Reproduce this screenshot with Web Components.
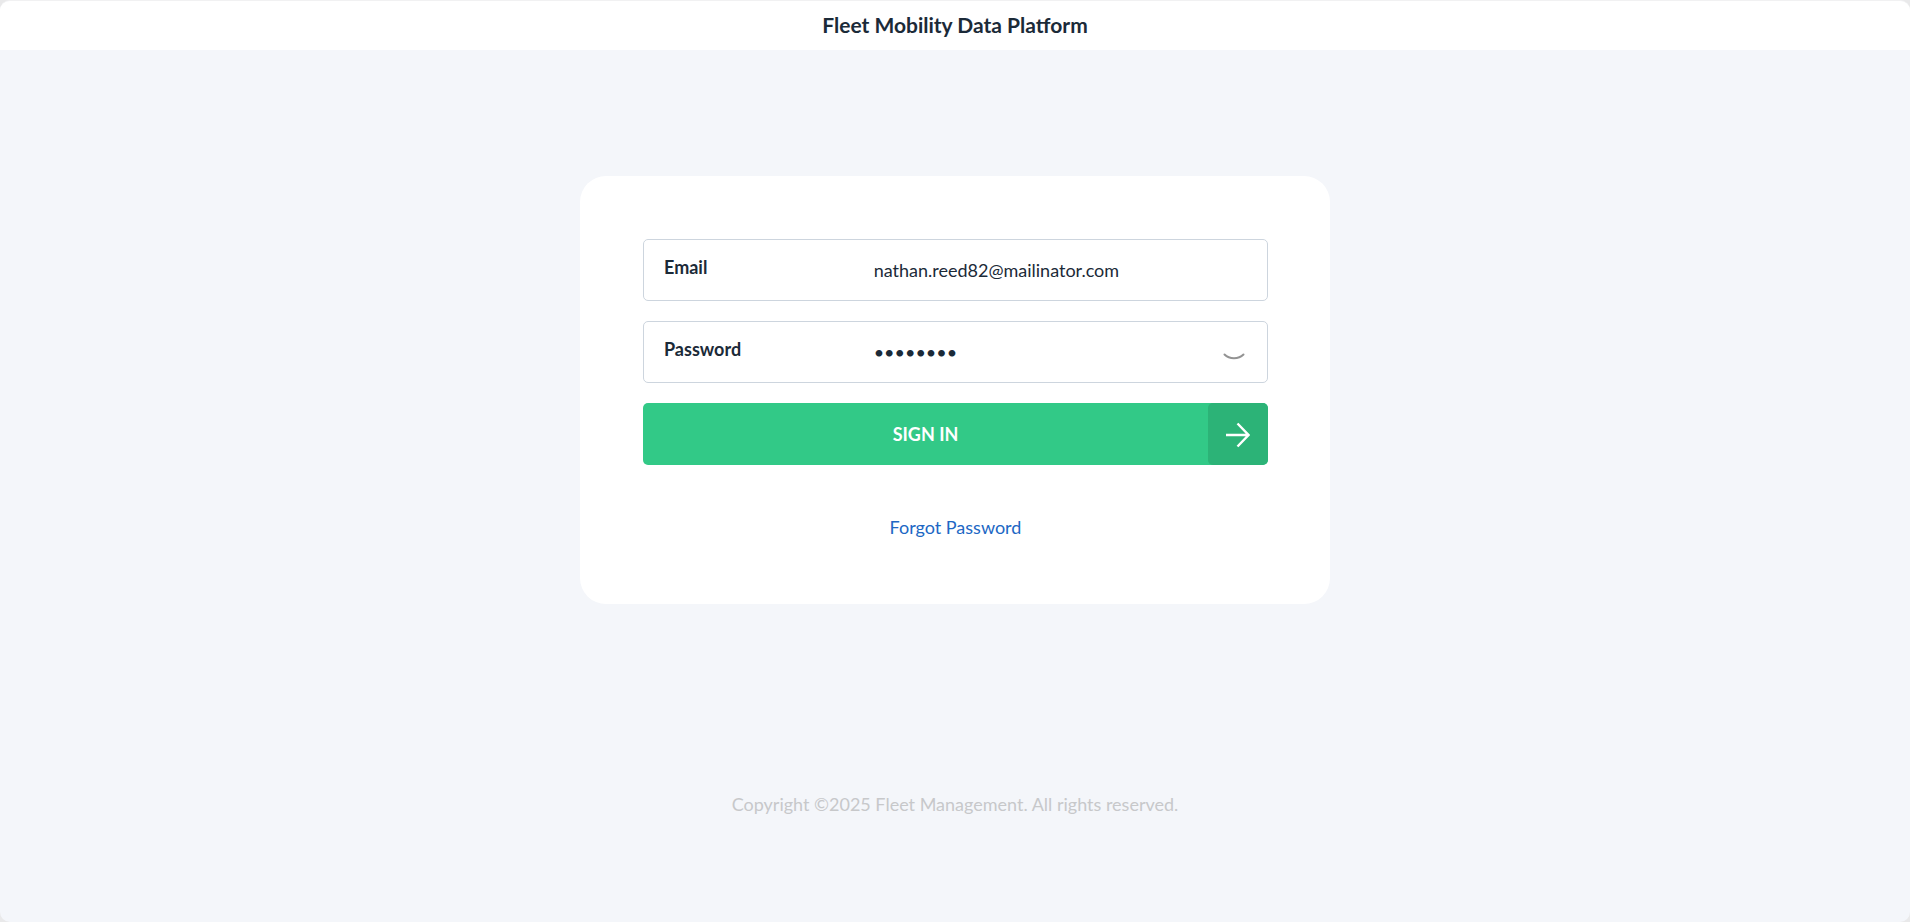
<!DOCTYPE html>
<html lang="en">
<head>
    <meta charset="UTF-8">
    <meta name="viewport" content="width=device-width, initial-scale=1.0">
    <title>Fleet Mobility Data Platform</title>
    <style>
        body {
            margin: 0;
            background: #e9e9ea;
            color: #1b2a38;
            font-family: Lato, sans-serif;
            font-size: 18px;
            line-height: 24px;
        }
    </style>
</head>
<body>
    <login-page>
        <page-header slot="header">Fleet Mobility Data Platform</page-header>
        <login-card></login-card>
        <page-footer slot="footer">Copyright ©2025 Fleet Management. All rights reserved.</page-footer>
    </login-page>

    <script>
        // page shell: header on top, card in the middle, footer below
        class LoginPage extends HTMLElement {
            constructor() {
                super();
                this.attachShadow({ mode: 'open' });
                this.shadowRoot.innerHTML = `
                    <style>
                        :host {
                            display: flex;
                            flex-direction: column;
                            box-sizing: border-box;
                            min-height: 100vh;
                            border-top: 1px solid #f1f1f2;
                            border-radius: 10px;
                            overflow: hidden;
                            background: #f4f6fa;
                        }

                        main {
                            display: flex;
                            justify-content: center;
                            padding: 126px 16px 0;
                        }

                        footer {
                            padding: 188px 16px 24px;
                        }
                    </style>

                    <slot name="header"></slot>
                    <main><slot></slot></main>
                    <footer><slot name="footer"></slot></footer>
                `;
            }
        }

        window.customElements.define('login-page', LoginPage);

        class PageHeader extends HTMLElement {
            constructor() {
                super();
                this.attachShadow({ mode: 'open' });
                this.shadowRoot.innerHTML = `
                    <style>
                        :host {
                            display: block;
                            background: #fff;
                        }

                        h1 {
                            margin: 0;
                            padding: 12px 16px 13px;
                            font-size: 21px;
                            font-weight: 700;
                            line-height: 24px;
                            text-align: center;
                        }
                    </style>

                    <header><h1><slot></slot></h1></header>
                `;
            }
        }

        window.customElements.define('page-header', PageHeader);

        class PageFooter extends HTMLElement {
            constructor() {
                super();
                this.attachShadow({ mode: 'open' });
                this.shadowRoot.innerHTML = `
                    <style>
                        :host {
                            display: block;
                            color: #c7c8ca;
                            text-align: center;
                        }
                    </style>

                    <slot></slot>
                `;
            }
        }

        window.customElements.define('page-footer', PageFooter);

        // bordered row with the label on the left and the input on the right
        class FormField extends HTMLElement {
            constructor() {
                super();
                this.attachShadow({ mode: 'open' });
                this.shadowRoot.innerHTML = `
                    <style>
                        :host {
                            display: grid;
                            grid-template-columns: 1fr 2fr 26px;
                            align-items: center;
                            box-sizing: border-box;
                            height: 62px;
                            padding: 0 20px;
                            border: 1px solid #cdd5de;
                            border-radius: 5px;
                            background: #fff;
                        }

                        label {
                            padding-bottom: 6px;
                            font-weight: 700;
                        }

                        input {
                            box-sizing: border-box;
                            width: 100%;
                            min-width: 0;
                            height: 48px;
                            padding: 0 24px;
                            border: 0;
                            outline: 0;
                            background: none;
                            color: inherit;
                            font: inherit;
                        }
                    </style>

                    <label for="control"></label>
                    <input id="control">
                    <slot></slot>
                `;

                const input = this.shadowRoot.querySelector('input');
                this.shadowRoot.querySelector('label').textContent = this.getAttribute('label');
                input.type = this.getAttribute('type');
                input.value = this.getAttribute('value');
            }

            set type(type) {
                this.shadowRoot.querySelector('input').type = type;
            }

            get type() {
                return this.shadowRoot.querySelector('input').type;
            }
        }

        window.customElements.define('form-field', FormField);

        class SubmitButton extends HTMLElement {
            constructor() {
                super();
                this.attachShadow({ mode: 'open' });
                this.shadowRoot.innerHTML = `
                    <style>
                        :host {
                            display: block;
                        }

                        button {
                            display: flex;
                            align-items: stretch;
                            width: 100%;
                            height: 62px;
                            padding: 0;
                            border: 0;
                            border-radius: 5px;
                            overflow: hidden;
                            background: #32c987;
                            color: #fff;
                            font: inherit;
                            font-weight: 700;
                            cursor: pointer;
                        }

                        .text {
                            flex: 1;
                            align-self: center;
                        }

                        .arrow {
                            display: flex;
                            align-items: center;
                            justify-content: center;
                            width: 60px;
                            border-radius: 5px;
                            background: #2cb377;
                        }
                    </style>

                    <button type="button">
                        <span class="text"><slot></slot></span>
                        <span class="arrow">
                            <svg width="24" height="28" viewBox="0 0 24 28" fill="none" stroke="#fff" stroke-width="2.4" aria-hidden="true">
                                <path d="M0 15H22.5M11.5 3.5L22.5 15L11.5 26.5" />
                            </svg>
                        </span>
                    </button>
                `;
            }
        }

        window.customElements.define('submit-button', SubmitButton);

        class LoginCard extends HTMLElement {
            constructor() {
                super();
                this.attachShadow({ mode: 'open' });
                this.shadowRoot.innerHTML = `
                    <style>
                        :host {
                            display: block;
                            box-sizing: border-box;
                            width: 100%;
                            max-width: 750px;
                            padding: 63px 62px 65px 63px;
                            border-radius: 26px;
                            background: #fff;
                        }

                        form {
                            display: flex;
                            flex-direction: column;
                            gap: 20px;
                        }

                        #toggle {
                            display: flex;
                            padding: 0;
                            border: 0;
                            background: none;
                            cursor: pointer;
                        }

                        a {
                            align-self: center;
                            margin-top: 30px;
                            color: #2067c4;
                            text-decoration: none;
                        }
                    </style>

                    <form>
                        <form-field label="Email" type="email" value="nathan.reed82@mailinator.com"></form-field>
                        <form-field label="Password" type="password" value="12345678">
                            <button id="toggle" type="button" aria-label="Show password">
                                <svg width="26" height="26" viewBox="0 0 26 26" fill="none" stroke="#939393" stroke-width="2" stroke-linecap="round">
                                    <path d="M3.5 15.5C8.5 20.5 17.5 20.5 22.5 15.5" />
                                </svg>
                            </button>
                        </form-field>
                        <submit-button>SIGN IN</submit-button>
                        <a href="#">Forgot Password</a>
                    </form>
                `;
            }

            connectedCallback() {
                const field = this.shadowRoot.querySelector('form-field[type="password"]');

                this.shadowRoot.querySelector('#toggle').addEventListener('click', () => {
                    field.type = field.type === 'password' ? 'text' : 'password';
                });
            }
        }

        window.customElements.define('login-card', LoginCard);
    </script>
</body>
</html>
